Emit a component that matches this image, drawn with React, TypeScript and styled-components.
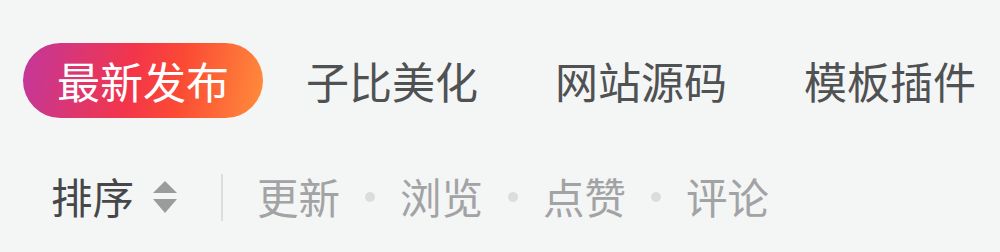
import React, { useState } from 'react'
import styled, { createGlobalStyle, css } from 'styled-components'

const GlobalStyle = createGlobalStyle`
  html, body {
    margin: 0;
    padding: 0;
    background: #f4f5f5;
  }
  body {
    font-family: 'Noto Sans CJK SC', 'Noto Sans', sans-serif;
  }
`

const Page = styled.div`
  width: 1000px;
  height: 252px;
  display: flex;
  flex-direction: column;
  background: #f4f5f5;
`

const Tabs = styled.nav`
  display: flex;
  align-items: center;
  gap: 9px;
  margin: 43px 0 0 23px;
  height: 75px;
`

const Tab = styled.div<{ $active?: boolean }>`
  height: 75px;
  padding: 0 34px;
  display: flex;
  align-items: center;
  border-radius: 38px;
  font-size: 43px;
  line-height: 1;
  color: #4f5152;
  white-space: nowrap;
  ${(p) =>
    p.$active &&
    css`
      color: #fff;
      background: linear-gradient(100deg, #c2379c 0%, #f3354a 45%, #fb4a34 65%, #ff8d3b 100%);
    `}
`

const SortBar = styled.div`
  display: flex;
  align-items: center;
  height: 50px;
  margin: 54px 0 0 51px;
`

const SortLabel = styled.span`
  font-size: 41.5px;
  line-height: 1;
  color: #454748;
`

const SortIcon = styled.svg`
  margin-left: 18px;
  width: 26px;
  height: 34px;
`

const Divider = styled.span`
  width: 2px;
  height: 47px;
  background: #dcdddd;
  margin: 0 34px 0 43px;
`

const Option = styled.span`
  font-size: 41.5px;
  line-height: 1;
  color: #a2a3a4;
`

const Dot = styled.span`
  width: 10px;
  height: 10px;
  border-radius: 50%;
  background: #dcdcdc;
  margin: 0 25px;
`

const tabs = ['最新发布', '子比美化', '网站源码', '模板插件']
const options = ['更新', '浏览', '点赞', '评论']

export default function App() {
  const [active] = useState(0)
  return (
    <Page>
      <GlobalStyle />
      <Tabs>
        {tabs.map((t, i) => (
          <Tab key={t} $active={i === active}>
            {t}
          </Tab>
        ))}
      </Tabs>
      <SortBar>
        <SortLabel>排序</SortLabel>
        <SortIcon viewBox="0 0 26 34">
          <path d="M13 1 L25 13 H1 Z" fill="#9a9b9b" />
          <path d="M1 19 H25 L13 33 Z" fill="#9a9b9b" />
        </SortIcon>
        <Divider />
        {options.map((o, i) => (
          <React.Fragment key={o}>
            {i > 0 && <Dot />}
            <Option>{o}</Option>
          </React.Fragment>
        ))}
      </SortBar>
    </Page>
  )
}
